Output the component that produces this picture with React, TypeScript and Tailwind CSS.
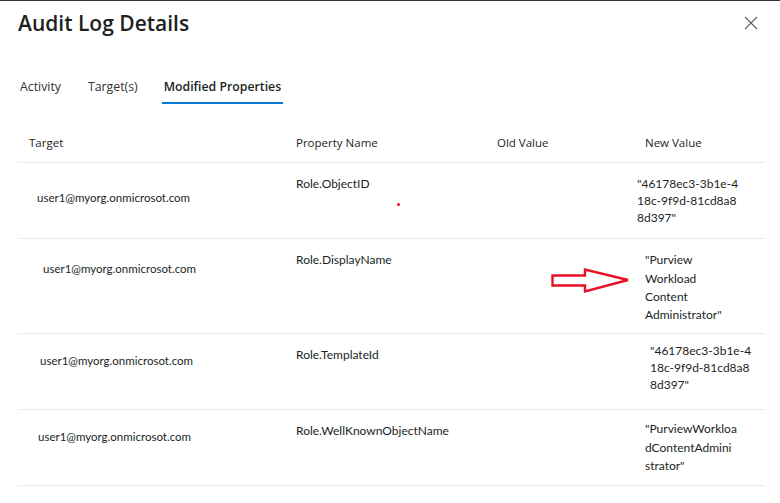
import React from 'react';

interface PropRow {
    target: string;
    targetPad: string;
    name: string;
    namePad: string;
    value: string[];
    valuePad: string;
    valueLeading: string;
    height: string;
    arrow?: boolean;
}

const rows: PropRow[] = [
    {
        target: 'user1@myorg.onmicrosot.com',
        targetPad: 'pt-[26px] pl-[19px]',
        name: 'Role.ObjectID',
        namePad: 'pt-[12px]',
        value: ['"46178ec3-3b1e-4', '18c-9f9d-81cd8a8', '8d397"'],
        valuePad: 'pt-[12px] pl-0',
        valueLeading: 'leading-[17px]',
        height: 'h-[76px]',
    },
    {
        target: 'user1@myorg.onmicrosot.com',
        targetPad: 'pt-[21px] pl-[25px]',
        name: 'Role.DisplayName',
        namePad: 'pt-[12px]',
        value: ['"Purview', 'Workload', 'Content', 'Administrator"'],
        valuePad: 'pt-[12px] pl-[8px]',
        valueLeading: 'leading-[18.3px]',
        height: 'h-[95px]',
        arrow: true,
    },
    {
        target: 'user1@myorg.onmicrosot.com',
        targetPad: 'pt-[18px] pl-[22px]',
        name: 'Role.TemplateId',
        namePad: 'pt-[12px]',
        value: ['"46178ec3-3b1e-4', '18c-9f9d-81cd8a8', '8d397"'],
        valuePad: 'pt-[8px] pl-[13px]',
        valueLeading: 'leading-[17px]',
        height: 'h-[76px]',
    },
    {
        target: 'user1@myorg.onmicrosot.com',
        targetPad: 'pt-[18px] pl-[20px]',
        name: 'Role.WellKnownObjectName',
        namePad: 'pt-[12px]',
        value: ['"PurviewWorkloa', 'dContentAdmini', 'strator"'],
        valuePad: 'pt-[10px] pl-[8px]',
        valueLeading: 'leading-[18.5px]',
        height: 'h-[76px]',
    },
];

const cols = 'grid grid-cols-[278px_201px_140px_128px]';

// hollow red callout arrow
const OutlineArrow = () => (
    <svg className="absolute left-[-86px] top-[29px]" width="80" height="26" viewBox="0 0 80 26">
        <path d="M1.5 7.5 H34 V1.5 L77 12 L34 23.5 V17.5 H1.5 Z" fill="white" stroke="#e81123" strokeWidth="2.4" strokeLinejoin="miter" />
    </svg>
);

export default function App() {
    return (
        <div className="w-[780px] h-[503px] bg-white border-t border-[#333] text-[#323130] overflow-hidden" style={{ fontFamily: '"Open Sans", "Noto Sans", sans-serif' }}>
            {/* header */}
            <div className="flex items-start justify-between pl-[18px] pr-[22px] pt-[7px]">
                <h1 className="text-[21px] font-semibold leading-[30px] text-[#201f1e]">Audit Log Details</h1>
                <button className="mt-[8px] text-[#605e5c]">
                    <svg width="14" height="14" viewBox="0 0 14 14">
                        <path d="M1 1 L13 13 M13 1 L1 13" stroke="currentColor" strokeWidth="1.1" />
                    </svg>
                </button>
            </div>

            {/* tabs */}
            <div className="flex items-end pl-[20px] mt-[40px] text-[12.3px]">
                <div className="pb-[8px] mr-[27px] text-[#323130]">Activity</div>
                <div className="pb-[8px] mr-[24px] text-[#323130]">Target(s)</div>
                <div className="relative pb-[8px] px-[2px] font-semibold text-[#201f1e]">
                    Modified Properties
                    <div className="absolute left-0 right-0 bottom-0 h-[2px] bg-[#0078d4]" />
                </div>
            </div>

            {/* table */}
            <div className="mx-[18px] mt-[19px] w-[747px] text-[11.5px]">
                <div className={`${cols} h-[40px] items-center border-b border-[#edebe9] text-[#252423]`}>
                    <div className="pl-[11px]">Target</div>
                    <div>Property Name</div>
                    <div>Old Value</div>
                    <div className="pl-[8px]">New Value</div>
                </div>
                {rows.map((r, i) => (
                    <div key={i} className={`${cols} ${r.height} border-b border-[#edebe9] text-[12px] text-[#201f1e]`} style={{ fontFamily: 'Lato, "Open Sans", sans-serif' }}>
                        <div className={`${r.targetPad} text-[11.5px] leading-[17px]`}>{r.target}</div>
                        <div className={`${r.namePad} leading-[17px] relative`}>
                            {r.name}
                            {i === 0 && <span className="absolute left-[101px] top-[40px] w-[3px] h-[3px] rounded-full bg-[#e81123]" />}
                        </div>
                        <div />
                        <div className={`${r.valuePad} ${r.valueLeading} relative`}>
                            {r.arrow && <OutlineArrow />}
                            {r.value.map((line, j) => (
                                <div key={j}>{line}</div>
                            ))}
                        </div>
                    </div>
                ))}
            </div>
        </div>
    );
}
